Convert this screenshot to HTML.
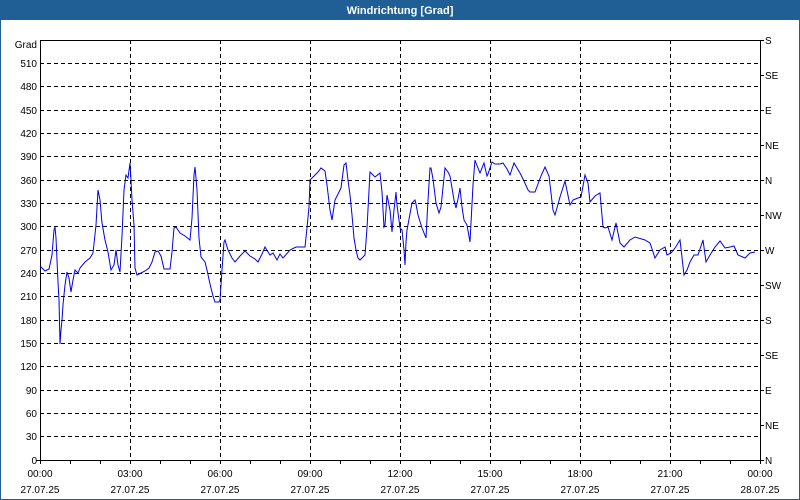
<!DOCTYPE html>
<html><head><meta charset="utf-8"><style>
html,body{margin:0;padding:0;width:800px;height:500px;overflow:hidden;background:#fff}
svg{display:block}
text{font-family:"Liberation Sans","DejaVu Sans",sans-serif;font-size:10px;fill:#000}
</style></head><body>
<svg width="800" height="500" viewBox="0 0 800 500">
<rect x="0" y="0" width="800" height="500" fill="#1f5f95"/>
<rect x="1" y="20" width="798" height="479" fill="#fff"/>
<text x="400" y="14" text-anchor="middle" style="fill:#fff;font-weight:bold;font-size:11px">Windrichtung [Grad]</text>
<g stroke="#000" stroke-width="1" stroke-dasharray="4,3" fill="none">
<path d="M40 63.5H760M40 86.5H760M40 110.5H760M40 133.5H760M40 156.5H760M40 180.5H760M40 203.5H760M40 226.5H760M40 250.5H760M40 273.5H760M40 296.5H760M40 320.5H760M40 343.5H760M40 366.5H760M40 390.5H760M40 413.5H760M40 436.5H760"/>
<path d="M130.5 40V460M220.5 40V460M310.5 40V460M400.5 40V460M490.5 40V460M580.5 40V460M670.5 40V460"/>
</g>
<g stroke="#000" stroke-width="1" fill="none">
<path d="M40.5 40V464M40 40.5H760.5V460M36 460.5H760.5"/>
<path d="M70.5 460v4M100.5 460v4M130.5 460v4M160.5 460v4M190.5 460v4M220.5 460v4M250.5 460v4M280.5 460v4M310.5 460v4M340.5 460v4M370.5 460v4M400.5 460v4M430.5 460v4M460.5 460v4M490.5 460v4M520.5 460v4M550.5 460v4M580.5 460v4M610.5 460v4M640.5 460v4M670.5 460v4M700.5 460v4M730.5 460v4M760.5 460v4"/>
<path d="M760 40.5h4M760 75.5h4M760 110.5h4M760 145.5h4M760 180.5h4M760 215.5h4M760 250.5h4M760 285.5h4M760 320.5h4M760 355.5h4M760 390.5h4M760 425.5h4M760 460.5h4"/>
</g>
<g text-anchor="end">
<text x="37" y="48">Grad</text>
<text x="37" y="67">510</text><text x="37" y="90">480</text><text x="37" y="114">450</text><text x="37" y="137">420</text><text x="37" y="160">390</text><text x="37" y="184">360</text><text x="37" y="207">330</text><text x="37" y="230">300</text><text x="37" y="254">270</text><text x="37" y="277">240</text><text x="37" y="300">210</text><text x="37" y="324">180</text><text x="37" y="347">150</text><text x="37" y="370">120</text><text x="37" y="394">90</text><text x="37" y="417">60</text><text x="37" y="440">30</text><text x="37" y="464">0</text>
</g>
<g>
<text x="765" y="44">S</text><text x="765" y="79">SE</text><text x="765" y="114">E</text><text x="765" y="149">NE</text><text x="765" y="184">N</text><text x="765" y="219">NW</text><text x="765" y="254">W</text><text x="765" y="289">SW</text><text x="765" y="324">S</text><text x="765" y="359">SE</text><text x="765" y="394">E</text><text x="765" y="429">NE</text><text x="765" y="464">N</text>
</g>
<g text-anchor="middle">
<text x="40" y="477">00:00</text><text x="130" y="477">03:00</text><text x="220" y="477">06:00</text><text x="310" y="477">09:00</text><text x="400" y="477">12:00</text><text x="490" y="477">15:00</text><text x="580" y="477">18:00</text><text x="670" y="477">21:00</text><text x="760" y="477">00:00</text>
<text x="40" y="493">27.07.25</text><text x="130" y="493">27.07.25</text><text x="220" y="493">27.07.25</text><text x="310" y="493">27.07.25</text><text x="400" y="493">27.07.25</text><text x="490" y="493">27.07.25</text><text x="580" y="493">27.07.25</text><text x="670" y="493">27.07.25</text><text x="760" y="493">28.07.25</text>
</g>
<polyline fill="none" stroke="#0000ee" stroke-width="1" points="40,266 45,271 49,269 52,255 54,230 55,227 56,238 57,260 58,282 59,300 60,344 61,330 62,320 63,305 65,285 67,272 69,278 71,292 73,280 75,270 78,273 80,268 85,262 90,258 93,253 96,225 98,190 100,200 102,223 105,240 108,252 111,270 114,265 116,250 118,265 120,272 122,236 124,190 126,175 128,178 130,163 131,180 132,200 134,225 135,268 137,275 141,273 145,271 149,268 152,262 155,252 158,251 161,256 164,269 170,269 172,252 174,228 176,227 180,233 185,236 190,240 192,218 194,175 195,167 196,178 197,190 199,238 201,257 205,262 207,270 210,284 213,296 215,302 219,302 220,300 222,270 224,242 225,240 228,250 232,258 235,262 240,256 245,251 250,256 255,259 258,262 262,254 265,247 268,252 270,255 273,253 277,260 280,254 283,258 290,250 296,247 305,247 307,228 309,207 310,180 314,176 318,172 321,168 325,171 327,185 330,210 332,220 335,200 339,192 341,188 344,165 346,163 348,180 350,195 352,215 354,238 356,250 358,258 360,260 365,255 367,228 370,172 375,177 380,173 382,192 384,227 385,225 387,195 390,210 392,232 394,210 396,192 397,205 400,228 402,230 404,250 405,265 406,242 407,230 412,203 415,200 416,204 418,215 422,228 426,238 428,200 430,168 431,168 433,179 436,203 439,213 441,207 445,168 448,172 450,176 452,188 454,200 456,208 458,199 460,188 462,207 464,220 467,225 470,242 473,185 475,160 476,163 480,173 484,163 487,176 488,174 492,162 495,164 500,164 503,163 507,169 510,175 514,163 520,173 524,181 528,190 530,192 535,192 541,176 545,167 549,176 553,210 555,215 560,197 565,181 570,205 573,200 578,198 581,197 585,175 588,183 590,202 595,196 600,193 603,227 605,228 608,227 612,240 616,223 620,243 624,247 630,240 635,237 645,240 650,243 655,258 660,250 665,247 667,255 671,253 675,248 680,240 684,275 687,270 690,262 694,255 698,255 703,240 706,262 710,255 715,247 720,241 725,248 730,247 734,246 738,255 745,258 750,253 755,252"/>
</svg>
</body></html>
